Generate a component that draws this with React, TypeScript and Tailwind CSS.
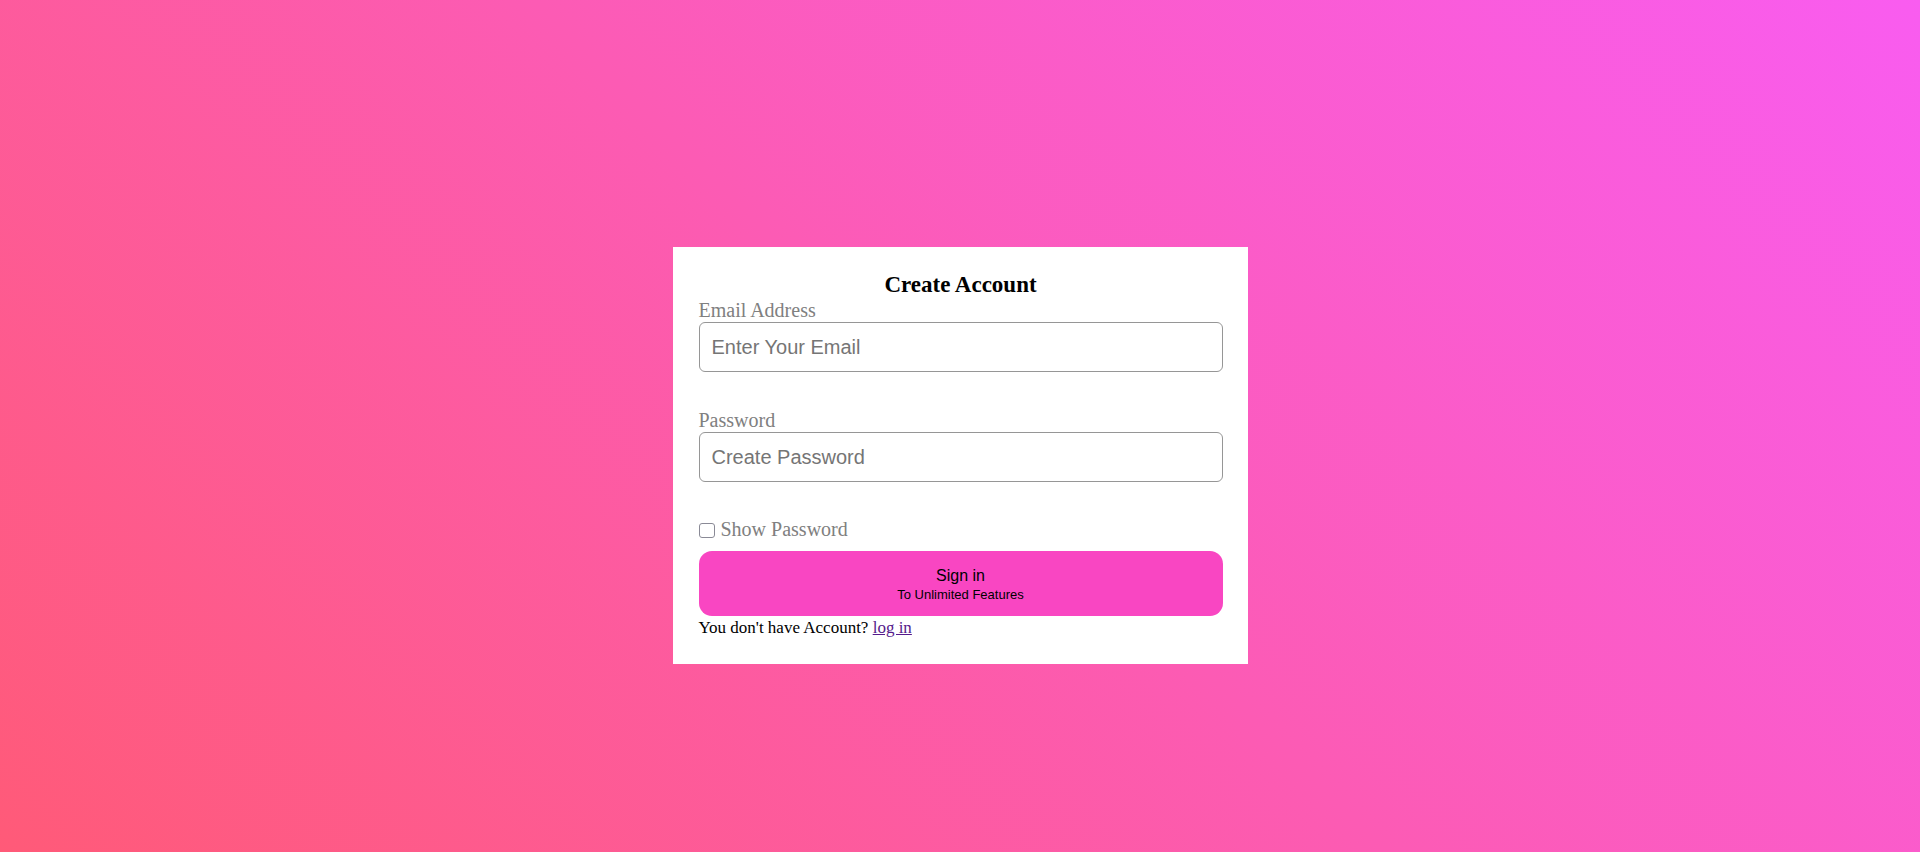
import React from "react";

export default function App() {
  return (
    <div className="min-h-[852px] w-full bg-[linear-gradient(45deg,#ff5a78,#f95cf0)] flex justify-center items-start pt-[247px]">
      <div className="w-[575px] h-[417px] bg-white pl-[26px] pr-[25px] pt-[25px] flex flex-col font-['Liberation_Serif',serif]">
        <h2 className="text-center text-[23px] leading-[26px] font-bold text-black">Create Account</h2>
        <label className="text-[20px] leading-[24px] text-[#808080]">Email Address</label>
        <input
          type="email"
          placeholder="Enter Your Email"
          className="h-[50px] w-full border border-[#969696] rounded-[6px] px-[12px] text-[20px] font-['Liberation_Sans',sans-serif] text-black placeholder:text-[#757575] outline-none bg-white"
        />
        <label className="mt-[36px] text-[20px] leading-[24px] text-[#808080]">Password</label>
        <input
          type="password"
          placeholder="Create Password"
          className="h-[50px] w-full border border-[#969696] rounded-[6px] px-[12px] text-[20px] font-['Liberation_Sans',sans-serif] text-black placeholder:text-[#757575] outline-none bg-white"
        />
        <div className="mt-[35px] flex items-start gap-[6px] h-[24px]">
          <span className="mt-[6px] w-[16px] h-[15px] border-[1.5px] border-[#8a8a96] rounded-[3px] bg-white shrink-0"></span>
          <span className="text-[20px] leading-[24px] text-[#808080]">Show Password</span>
        </div>
        <button className="mt-[10px] h-[65px] w-full rounded-[13px] bg-[#f946c2] flex flex-col items-center justify-center text-black font-['Liberation_Sans',sans-serif]">
          <span className="text-[16px] leading-[22px]">Sign in</span>
          <span className="text-[13px] leading-[16px]">To Unlimited Features</span>
        </button>
        <p className="mt-[3px] text-[17px] leading-[18px] text-black">
          You don't have Account?{" "}
          <a href="#" className="text-[#551a8b] underline">log in</a>
        </p>
      </div>
    </div>
  );
}
